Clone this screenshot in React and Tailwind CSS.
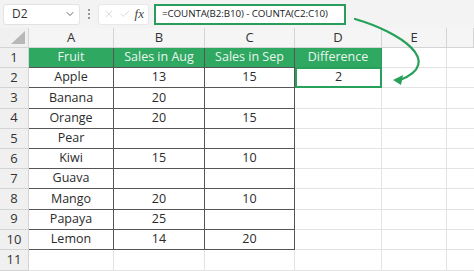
import { ChevronDown, X, Check } from 'lucide-react';

const rows = [
  ['Fruit', 'Sales in Aug', 'Sales in Sep', 'Difference'],
  ['Apple', '13', '15', '2'],
  ['Banana', '20', '', ''],
  ['Orange', '20', '15', ''],
  ['Pear', '', '', ''],
  ['Kiwi', '15', '10', ''],
  ['Guava', '', '', ''],
  ['Mango', '20', '10', ''],
  ['Papaya', '25', '', ''],
  ['Lemon', '14', '20', ''],
];

const cols = ['A', 'B', 'C', 'D', 'E', ''];

function Cell({ r, c, value }) {
  // table body A:C gets dark borders, D1 is green header, D2 has the green outline
  if (c < 3) {
    const header = r === 0;
    return (
      <div
        className={`flex items-center justify-center border-r border-b border-[#555] ${
          header ? 'bg-[#2fa862] text-[#e9f6ee]' : 'bg-white text-[#2b2b2b]'
        }`}
      >
        {value}
      </div>
    );
  }
  if (c === 3 && r === 0) {
    return (
      <div className="flex items-center justify-center bg-[#2fa862] text-[#e9f6ee] border-r border-b border-[#2a9a59]">
        {value}
      </div>
    );
  }
  if (c === 3 && r === 1) {
    return (
      <div className="flex items-center justify-center bg-white text-[#2b2b2b] border-2 border-[#27a05a] -mt-px">
        {value}
      </div>
    );
  }
  return <div className="border-r border-b border-[#e3e3e3] bg-white" />;
}

export default function App() {
  return (
    <div
      className="relative w-[474px] h-[271px] overflow-hidden bg-white text-[12.5px]"
      style={{ fontFamily: '"Open Sans", "Noto Sans", sans-serif' }}
    >
      {/* formula bar */}
      <div className="flex items-center h-[28px] bg-[#f3f3f3] px-[3px] gap-[4px]">
        <div className="flex items-center justify-between w-[77px] h-[21px] bg-white border border-[#e2e2e2] rounded-[3px] pl-[8px] pr-[3px] text-[12px] text-[#333]">
          <span>D2</span>
          <ChevronDown size={12} strokeWidth={2} className="text-[#666]" />
        </div>
        <div className="flex flex-col gap-[2px] w-[10px] items-center">
          <span className="w-[2px] h-[2px] bg-[#777] rounded-full" />
          <span className="w-[2px] h-[2px] bg-[#777] rounded-full" />
          <span className="w-[2px] h-[2px] bg-[#777] rounded-full" />
        </div>
        <div className="flex items-center gap-[4px] w-[51px] h-[21px] bg-white border border-[#e8e8e8] rounded-[3px] px-[4px]">
          <X size={14} strokeWidth={1.3} className="text-[#c4c4c4]" />
          <Check size={14} strokeWidth={1.3} className="text-[#c4c4c4]" />
          <span className="text-[13px] italic text-[#444]" style={{ fontFamily: '"Liberation Serif", serif' }}>
            fx
          </span>
        </div>
        <div className="flex items-center w-[192px] h-[21px] ml-[1px] bg-white border-2 border-[#2a9d5c] pl-[6px] text-[9.8px] tracking-[-0.1px] text-[#222] whitespace-nowrap overflow-hidden">
          =COUNTA(B2:B10) - COUNTA(C2:C10)
        </div>
      </div>

      {/* sheet */}
      <div className="grid grid-cols-[29px_85px_91px_90px_87px_65px_27px] grid-rows-[20px_repeat(10,20.2px)_21px]">
        <div className="relative bg-[#f0f0f0] border-r border-b border-[#d4d4d4]">
          <svg width="16" height="14" viewBox="0 0 16 14" className="absolute right-[2px] bottom-[2px]">
            <polygon points="15,0 15,13 1,13" fill="#b8b8b8" />
          </svg>
        </div>
        {cols.map((h, i) => (
          <div
            key={'h' + i}
            className="flex items-center justify-center bg-[#f5f5f5] border-r border-b border-[#d4d4d4] text-[13px] text-[#333]"
          >
            {h}
          </div>
        ))}
        {[...rows, ['', '', '', '']].map((row, r) => (
          <div key={'r' + r} className="contents">
            <div className="flex items-center justify-center bg-[#f0f0f0] border-r border-b border-[#d4d4d4] text-[13px] text-[#333]">
              {r + 1}
            </div>
            {r < 10 ? (
              row.map((v, c) => <Cell key={c} r={r} c={c} value={v} />)
            ) : (
              <>
                <div className="border-r border-b border-[#e3e3e3]" />
                <div className="border-r border-b border-[#e3e3e3]" />
                <div className="border-r border-b border-[#e3e3e3]" />
                <div className="border-r border-b border-[#e3e3e3]" />
              </>
            )}
            <div className="border-r border-b border-[#e3e3e3]" />
            <div className="border-b border-[#e3e3e3]" />
          </div>
        ))}
      </div>

      {/* arrow from formula to result */}
      <svg className="absolute left-0 top-0 pointer-events-none" width="474" height="271">
        <path d="M355 19 C400 32 445 62 400 80" fill="none" stroke="#27a05a" strokeWidth="2.2" strokeLinecap="round" />
        <polygon points="393,80 403,75 401,85" fill="#27a05a" />
      </svg>
    </div>
  );
}
